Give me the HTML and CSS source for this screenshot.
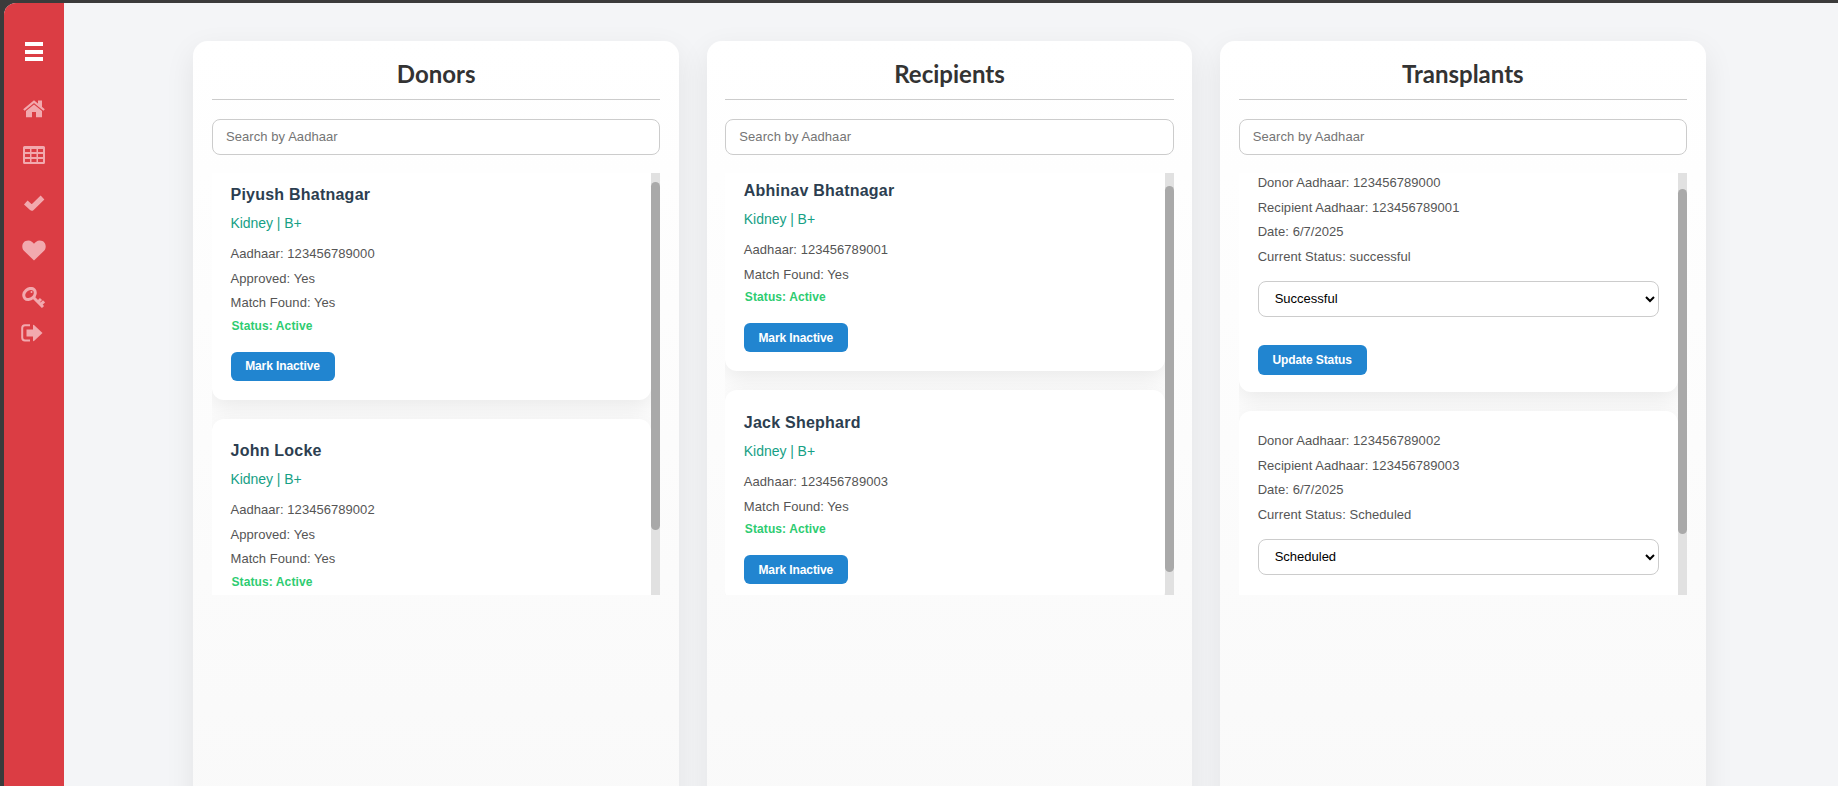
FILE: index.html
```html
<!DOCTYPE html>
<html lang="en">
<head>
<meta charset="utf-8">
<title>Organ Donation Dashboard</title>
<link rel="stylesheet" href="styles.css">
</head>
<body>
<div class="app">
  <nav class="sidebar">
    <div class="menu"><i></i><i></i><i></i></div>
    <svg class="icon home" viewBox="0 0 22 18"><path d="M11 4.500 19 11V17.300H13V12H9V17.300H3V11Z"/><path d="M.9 10 11 1.700 21.100 10" fill="none" stroke="currentColor" stroke-width="2.200"/><path d="M15 .5H19V8L15 4.500Z"/></svg>
    <svg class="icon table" viewBox="0 0 22 18"><path fill-rule="evenodd" d="M1.500 0H20.500Q22 0 22 1.500V16.500Q22 18 20.500 18H1.500Q0 18 0 16.500V1.500Q0 0 1.500 0ZM2 3V6H7V3ZM8.500 3V6H13.500V3ZM15 3V6H20V3ZM2 8V11H7V8ZM8.500 8V11H13.500V8ZM15 8V11H20V8ZM2 13V16H7V13ZM8.500 13V16H13.500V13ZM15 13V16H20V13Z"/></svg>
    <svg class="icon check" viewBox="0 0 22 18"><path d="M2.800 8.500 8.800 14 19.500 3.500" fill="none" stroke="currentColor" stroke-width="5.300" stroke-linejoin="round"/></svg>
    <svg class="icon heart" viewBox="0 0 24 21"><path d="M12 20.500 1.700 10.500C-1 7.500 0 .5 6.300.5 9 .5 11 2.500 12 3.800 13 2.500 15 .5 17.700.5 24 .5 25 7.500 22.300 10.500Z"/></svg>
    <svg class="icon key" viewBox="0 0 23 21"><g fill="none" stroke="currentColor"><ellipse cx="7.500" cy="7" rx="6.300" ry="5" transform="rotate(-42 7.500 7)" stroke-width="3"/><path d="M11 10 21 20M16 15 19 12M18.800 17.300 22 14.300" stroke-width="3"/></g><circle cx="9.500" cy="5" r="1"/></svg>
    <svg class="icon exit" viewBox="0 0 22 18"><path d="M9 1.200H4Q1.200 1.200 1.200 4V13.500Q1.200 16.500 4 16.500H9" fill="none" stroke="currentColor" stroke-width="2"/><path d="M5.500 5.500H12V1.500Q12 .5 13 1L21.500 9 13 17Q12 17.500 12 16.500V12.500H5.500Z"/></svg>
  </nav>
  <main class="board">
    <section class="column">
      <h2>Donors</h2>
      <input class="search" placeholder="Search by Aadhaar">
      <div class="scroller">
        <div class="list donors">
          <article class="card">
            <h3>Piyush Bhatnagar</h3><p class="organ">Kidney | B+</p>
            <p>Aadhaar: 123456789000</p><p>Approved: Yes</p><p>Match Found: Yes</p>
            <p class="status">Status: Active</p><button>Mark Inactive</button>
          </article>
          <article class="card">
            <h3>John Locke</h3><p class="organ">Kidney | B+</p>
            <p>Aadhaar: 123456789002</p><p>Approved: Yes</p><p>Match Found: Yes</p>
            <p class="status">Status: Active</p>
          </article>
        </div>
        <div class="track"><div class="thumb"></div></div>
      </div>
    </section>
    <section class="column middle">
      <h2>Recipients</h2>
      <input class="search" placeholder="Search by Aadhaar">
      <div class="scroller">
        <div class="list recipients">
          <article class="card">
            <h3>Abhinav Bhatnagar</h3><p class="organ">Kidney | B+</p>
            <p>Aadhaar: 123456789001</p><p>Match Found: Yes</p>
            <p class="status">Status: Active</p><button>Mark Inactive</button>
          </article>
          <article class="card">
            <h3>Jack Shephard</h3><p class="organ">Kidney | B+</p>
            <p>Aadhaar: 123456789003</p><p>Match Found: Yes</p>
            <p class="status">Status: Active</p><button>Mark Inactive</button>
          </article>
        </div>
        <div class="track t2"><div class="thumb"></div></div>
      </div>
    </section>
    <section class="column">
      <h2>Transplants</h2>
      <input class="search" placeholder="Search by Aadhaar">
      <div class="scroller">
        <div class="list transplants">
          <article class="card">
            <p>Donor Aadhaar: 123456789000</p><p>Recipient Aadhaar: 123456789001</p><p>Date: 6/7/2025</p><p>Current Status: successful</p>
            <select><option>Successful</option></select><button>Update Status</button>
          </article>
          <article class="card">
            <p>Donor Aadhaar: 123456789002</p><p>Recipient Aadhaar: 123456789003</p><p>Date: 6/7/2025</p><p>Current Status: Scheduled</p>
            <select><option>Scheduled</option></select>
          </article>
        </div>
        <div class="track t3"><div class="thumb"></div></div>
      </div>
    </section>
  </main>
</div>
</body>
</html>
```
FILE: styles.css
```css
* { box-sizing: border-box; margin: 0; }
body { background: #3b3b3b; padding: 3px 0 0 4px; height: 786px; overflow: hidden; font-family: "Liberation Sans", Arial, sans-serif; }
.app { display: flex; height: 783px; background: #f4f5f7; border-top-left-radius: 12px; overflow: hidden; }
.sidebar { width: 60px; flex: none; background: #db3d44; color: #f2a9ae; display: flex; flex-direction: column; align-items: center; padding-top: 39px; }
.menu { width: 18px; height: 19px; display: flex; flex-direction: column; justify-content: space-between; }
.menu i { height: 4px; background: #fff; }
.icon { display: block; width: 22px; height: 18px; fill: currentColor; flex: none; }
.home { margin-top: 39px; }
.table { margin-top: 28px; }
.check { margin-top: 30px; }
.heart { width: 24px; height: 21px; margin-top: 28px; }
.key { width: 23px; height: 21px; margin: 26px 1px 0 0; }
.exit { margin: 16px 4px 0 0; }
.board { display: flex; gap: 28px; padding: 38px 132px 0 129px; flex: 1; }
.column { flex: 1; min-width: 0; height: 800px; padding: 0 19px; border-radius: 15px; background: linear-gradient(#fff, #f9f9f9); box-shadow: 0 10px 30px rgba(0,0,0,.08); }
.middle { padding: 0 18px; }
h2 { font: 700 24px/29px Lato, sans-serif; color: #333; text-align: center; height: 59px; padding-top: 18px; border-bottom: 1px solid #ccc; }
.search { display: block; width: 100%; height: 36px; margin: 19px 0 18px; padding: 0 13px 2px; border: 1px solid #ccc; border-radius: 8px; font: 13px "Liberation Sans", Arial, sans-serif; letter-spacing: .07px; background: #fff; }
.search::placeholder { color: #757575; }
.scroller { display: flex; height: 422px; overflow: hidden; }
.list { flex: 1; display: flex; flex-direction: column; gap: 19px; }
.donors { margin-top: -10px; }
.recipients { margin-top: -15px; }
.transplants { margin-top: -20px; }
.card { flex: none; height: 237px; padding: 20px 19px 18px 18.500px; border-radius: 12px; background: #fff; box-shadow: 0 7px 22px rgba(0,0,0,.08); }
.recipients .card { height: 213px; padding-top: 21px; }
.transplants .card { height: 239px; padding: 18px 19px; }
h3 { font-size: 16px; line-height: 24px; color: #2c3e50; letter-spacing: .23px; }
.card p { font-size: 13px; line-height: 24.600px; color: #555; letter-spacing: .05px; }
.card .organ { font-size: 14px; line-height: 20px; color: #16a085; margin: 6px 0 9px; letter-spacing: -.05px; }
.card .status { font-size: 12px; font-weight: 700; line-height: 20px; color: #2ecc71; margin: 0 0 16px 1px; letter-spacing: .1px; }
button { display: block; height: 29px; width: 104px; padding: 0; border: 0; border-radius: 6px; background: #2185d0; color: #fff; font: 700 12px "Liberation Sans", Arial, sans-serif; letter-spacing: -.1px; }
select { display: block; width: 100%; height: 36px; margin: 11.400px 0 28.400px; padding: 0 12px; border: 1px solid #ccc; border-radius: 8px; background: #fff; color: #000; font: 13px "Liberation Sans", Arial, sans-serif; }
.transplants button { width: 109px; height: 30px; }
.track { display: flow-root; width: 9px; flex: none; background: #e1e1e1; }
.thumb { width: 9px; height: 348px; margin-top: 9px; border-radius: 5px; background: #a9a9a9; }
.t2 .thumb { height: 386px; margin-top: 13px; }
.t3 .thumb { height: 345px; margin-top: 16px; }
```
